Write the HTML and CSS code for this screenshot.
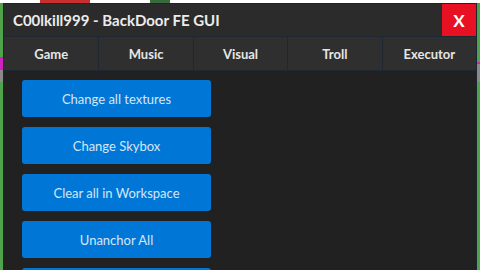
FILE: index.html
```html
<!DOCTYPE html>
<html>
<head>
<meta charset="utf-8">
<link rel="stylesheet" href="styles.css">
</head>
<body>
<div class="scene">
  <div class="window">
    <div class="titlebar">
      <span class="title">C00lkill999 - BackDoor FE GUI</span>
      <button class="close">X</button>
    </div>
    <div class="tabs">
      <div class="tab">Game</div>
      <div class="tab">Music</div>
      <div class="tab">Visual</div>
      <div class="tab">Troll</div>
      <div class="tab">Executor</div>
    </div>
    <div class="content">
      <button class="action">Change all textures</button>
      <button class="action">Change Skybox</button>
      <button class="action">Clear all in Workspace</button>
      <button class="action">Unanchor All</button>
      <button class="action" aria-label="More"></button>
    </div>
  </div>
</div>
</body>
</html>
```
FILE: styles.css
```css
html, body {
  margin: 0;
  padding: 0;
  width: 480px;
  height: 270px;
  overflow: hidden;
}
body {
  font-family: Lato, "Liberation Sans", sans-serif;
  background: #4fa34a;
}
.scene {
  padding: 3px 3px 0 3px;
  height: 267px;
  background:
    linear-gradient(to bottom, transparent 0, transparent 57px, #d020c0 57px, #d020c0 70px, #8a8a8a 70px, #8a8a8a 82px, transparent 82px) left top / 3px 100% no-repeat,
    linear-gradient(to bottom, transparent 0, transparent 62px, #d020c0 62px, #d020c0 64px, #8a8a8a 64px, #8a8a8a 82px, transparent 82px) right top / 3px 100% no-repeat,
    linear-gradient(to right, #ffffff 0, #ffffff 40px, #c83030 40px, #c83030 90px, #ffffff 90px, #ffffff 150px, #3a6b3a 150px, #3a6b3a 170px, #ffffff 170px) left top / 100% 3px no-repeat;
}
.window {
  width: 472px;
  height: 280px;
  background: #212121;
  border: 1px solid #1b2630;
  display: flex;
  flex-direction: column;
}
.titlebar {
  flex: none;
  height: 32px;
  background: #2b2b2b;
  display: flex;
  align-items: center;
  justify-content: space-between;
}
.title {
  color: #ececec;
  font-weight: 700;
  font-size: 15px;
  padding-left: 9px;
}
.close {
  width: 34px;
  height: 32px;
  border: none;
  background: #e81123;
  color: #ffffff;
  font-family: Lato, "Liberation Sans", sans-serif;
  font-weight: 700;
  font-size: 17px;
  padding: 0;
}
.tabs {
  flex: none;
  height: 33px;
  display: grid;
  grid-template-columns: repeat(5, 1fr);
  border-top: 1px solid #1d2833;
  border-bottom: 1px solid #1d2833;
  background: #2f2f2f;
}
.tab {
  display: flex;
  align-items: center;
  justify-content: center;
  color: #e6e6e6;
  font-weight: 700;
  font-size: 13px;
  border-left: 1px solid #1d2833;
}
.tab:first-child {
  border-left: none;
}
.content {
  display: flex;
  flex-direction: column;
  gap: 10px;
  padding: 9px 0 0 18px;
}
.action {
  width: 189px;
  height: 37px;
  flex: none;
  border: none;
  border-radius: 3px;
  background: #0077d6;
  color: #d6e6f5;
  font-family: Lato, "Liberation Sans", sans-serif;
  font-size: 13px;
  padding: 0;
}
```
